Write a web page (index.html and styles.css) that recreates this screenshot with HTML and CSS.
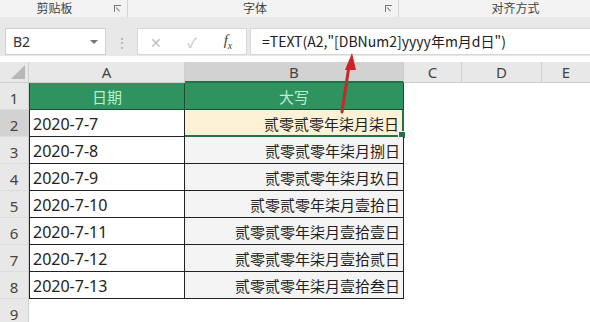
FILE: index.html
```html
<!DOCTYPE html>
<html lang="zh">
<head>
    <meta charset="UTF-8">
    <title>TEXT DBNum2</title>
    <link rel="stylesheet" href="styles.css">
</head>
<body>
    <div class="ribbon">
        <div class="group g1"><span class="label">剪贴板</span><span class="launcher"></span></div>
        <div class="group g2"><span class="label">字体</span><span class="launcher"></span></div>
        <div class="group g3"><span class="label">对齐方式</span></div>
    </div>
    <div class="band"></div>

    <div class="formula-bar">
        <div class="name-box">B2<span class="drop"></span></div>
        <div class="dots">&#8942;</div>
        <div class="fx-box">
            <span class="ico x">&#10005;</span>
            <span class="ico ok">&#10003;</span>
            <span class="ico fx">f<sub>x</sub></span>
        </div>
        <div class="formula">=TEXT(A2,"[DBNum2]yyyy年m月d日")</div>
    </div>

    <div class="sheet">
        <div class="corner"><span class="tri"></span></div>
        <div class="colhead">A</div>
        <div class="colhead sel">B</div>
        <div class="colhead">C</div>
        <div class="colhead">D</div>
        <div class="colhead last">E</div>

        <div class="rowhead">1</div>
        <div class="cell a title">日期</div>
        <div class="cell b title">大写</div>
        <div class="blank"></div>

        <div class="rowhead sel">2</div>
        <div class="cell a">2020-7-7</div>
        <div class="cell b active">贰零贰零年柒月柒日<span class="handle"></span></div>
        <div class="blank"></div>

        <div class="rowhead">3</div>
        <div class="cell a">2020-7-8</div>
        <div class="cell b">贰零贰零年柒月捌日</div>
        <div class="blank"></div>

        <div class="rowhead">4</div>
        <div class="cell a">2020-7-9</div>
        <div class="cell b">贰零贰零年柒月玖日</div>
        <div class="blank"></div>

        <div class="rowhead">5</div>
        <div class="cell a">2020-7-10</div>
        <div class="cell b">贰零贰零年柒月壹拾日</div>
        <div class="blank"></div>

        <div class="rowhead">6</div>
        <div class="cell a">2020-7-11</div>
        <div class="cell b">贰零贰零年柒月壹拾壹日</div>
        <div class="blank"></div>

        <div class="rowhead">7</div>
        <div class="cell a">2020-7-12</div>
        <div class="cell b">贰零贰零年柒月壹拾贰日</div>
        <div class="blank"></div>

        <div class="rowhead">8</div>
        <div class="cell a">2020-7-13</div>
        <div class="cell b">贰零贰零年柒月壹拾叁日</div>
        <div class="blank"></div>

        <div class="rowhead">9</div>
        <div class="blank wide"></div>
    </div>

    <svg class="arrow" width="590" height="322" viewBox="0 0 590 322">
        <line x1="342" y1="112" x2="349" y2="66" stroke="#c42a2a" stroke-width="3" stroke-linecap="round"/>
        <polygon points="352,53 345,70 356,70" fill="#d0202a"/>
    </svg>
</body>
</html>
```

FILE: styles.css
```css
body {
    margin: 0;
    width: 590px;
    height: 322px;
    overflow: hidden;
    position: relative;
    background: #fff;
    font-family: "Noto Sans CJK SC", "Noto Sans", sans-serif;
    color: #222;
}

/* ribbon group labels */
.ribbon {
    display: flex;
    height: 17px;
    background: #f3f3f3;
    font-size: 12px;
    color: #444;
    line-height: 15px;
}
.group {
    position: relative;
    display: flex;
    justify-content: center;
    border-right: 1px solid #d4d4d4;
    box-sizing: border-box;
}
.g1 { width: 128px; }
.g2 { width: 271px; }
.g3 { flex: 1; border-right: none; }
.g1 .label { transform: translateX(-9px); }
.g2 .label { transform: translateX(-8px); }
.g3 .label { transform: translateX(21px); }
/* little dialog launcher box in the group corner */
.launcher {
    position: absolute;
    right: 6px;
    top: 5px;
    width: 6px;
    height: 6px;
    border-left: 1px solid #777;
    border-top: 1px solid #777;
}
.launcher::after {
    content: "";
    position: absolute;
    left: 1px;
    top: 1px;
    width: 5px;
    height: 1px;
    background: #777;
    transform-origin: left;
    transform: rotate(45deg);
}
.band {
    height: 10px;
    background: #e8e8e8;
}

/* formula bar */
.formula-bar {
    display: flex;
    align-items: center;
    height: 29px;
    padding: 0 0 0 5px;
    background: #e8e8e8;
    font-size: 14px;
}
.name-box {
    position: relative;
    width: 101px;
    height: 27px;
    box-sizing: border-box;
    background: #fff;
    border: 1px solid #d0d0d0;
    padding-left: 7px;
    line-height: 25px;
    color: #333;
    font-family: "Noto Sans", sans-serif;
}
.drop {
    position: absolute;
    right: 7px;
    top: 11px;
    border-left: 4px solid transparent;
    border-right: 4px solid transparent;
    border-top: 4px solid #777;
}
.dots {
    width: 31px;
    text-align: center;
    color: #aaa;
    font-size: 14px;
}
.fx-box {
    display: flex;
    align-items: center;
    width: 110px;
    height: 27px;
    box-sizing: border-box;
    background: #fff;
    border: 1px solid #d6d6d6;
}
.ico {
    width: 36px;
    text-align: center;
    color: #c0c0c0;
    font-size: 14px;
}
.ico.fx {
    color: #444;
    font-family: "Liberation Serif", serif;
    font-style: italic;
    font-size: 15px;
}
.ico.fx sub { font-size: 10px; }
.formula {
    flex: 1;
    height: 27px;
    box-sizing: border-box;
    margin-left: 3px;
    background: #fff;
    border: 1px solid #d6d6d6;
    border-right: none;
    padding-left: 11px;
    line-height: 25px;
    color: #222;
    white-space: nowrap;
}

/* grid */
.sheet {
    display: grid;
    grid-template-columns: 29px 156px 219px 58px 80px 1fr;
    grid-template-rows: 21px repeat(9, 27px);
    margin-top: 6px;
    font-size: 15px;
}
.corner {
    position: relative;
    background: #e8e8e8;
    border-right: 1px solid #cfcfcf;
    border-bottom: 1px solid #cfcfcf;
    box-sizing: border-box;
}
.tri {
    position: absolute;
    right: 3px;
    bottom: 3px;
    border-left: 14px solid transparent;
    border-bottom: 14px solid #b8b8b8;
}
.colhead {
    background: #e8e8e8;
    border-right: 1px solid #cfcfcf;
    border-bottom: 1px solid #cfcfcf;
    box-sizing: border-box;
    text-align: center;
    line-height: 21px;
    color: #444;
    font-family: "Noto Sans", sans-serif;
}
.colhead.sel {
    background: #d2d2d2;
    border-bottom: 2px solid #217346;
}
.colhead.last { border-right: none; }
.rowhead {
    background: #e8e8e8;
    border-right: 1px solid #cfcfcf;
    border-bottom: 1px solid #dcdcdc;
    box-sizing: border-box;
    text-align: center;
    line-height: 30px;
    color: #444;
    font-family: "Noto Sans", sans-serif;
}
.rowhead.sel {
    background: #d2d2d2;
}
.cell {
    position: relative;
    box-sizing: border-box;
    border-right: 1px solid #222;
    border-bottom: 1px solid #222;
    line-height: 28px;
    white-space: nowrap;
}
.cell.a {
    border-left: 1px solid #222;
    padding-left: 3px;
    background: #fff;
    font-family: "Noto Sans", sans-serif;
    font-size: 16px;
}
.cell.b {
    text-align: right;
    padding-right: 3px;
    background: #f4f4f4;
}
.cell.title {
    background: #2f9360;
    color: #b6f2d2;
    text-align: center;
    font-family: "Noto Sans CJK SC", sans-serif;
    font-size: 15px;
    padding: 0;
    border-color: #1d4d33;
}
.cell.active {
    background: #fdf1d6;
    border-right: 2px solid #217346;
    border-bottom: 2px solid #217346;
    line-height: 27px;
}
.handle {
    position: absolute;
    right: -4px;
    bottom: -4px;
    width: 6px;
    height: 6px;
    background: #217346;
    border: 1px solid #fff;
}
.blank {
    grid-column: 4 / 7;
    background: #fff;
}
.blank.wide { grid-column: 2 / 7; }

.arrow {
    position: absolute;
    left: 0;
    top: 0;
    pointer-events: none;
}
```
